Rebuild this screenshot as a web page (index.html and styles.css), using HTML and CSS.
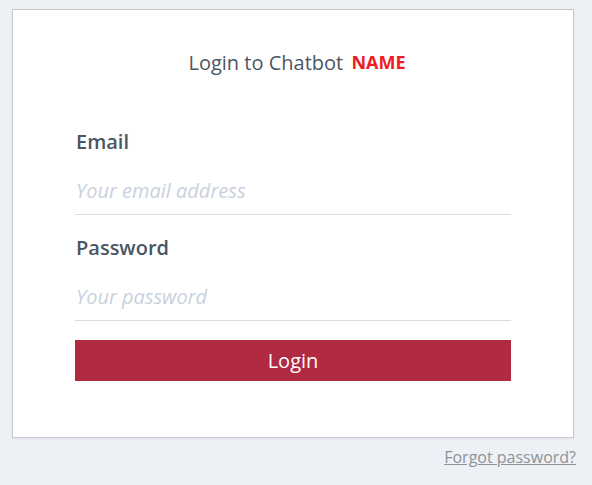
FILE: index.html
```html
<!DOCTYPE html>
<html>
<head>
<meta charset="utf-8">
<link rel="stylesheet" href="styles.css">
</head>
<body>
<div class="page">
  <div class="card">
    <h1 class="title">Login to Chatbot <span class="brand">NAME</span></h1>
    <form class="form">
      <label class="label" for="email">Email</label>
      <input class="input" id="email" type="text" placeholder="Your email address">
      <label class="label" for="pw">Password</label>
      <input class="input" id="pw" type="password" placeholder="Your password">
      <button class="btn" type="button">Login</button>
    </form>
  </div>
  <div class="footer"><a class="forgot" href="#">Forgot password?</a></div>
</div>
</body>
</html>
```
FILE: styles.css
```css
html, body {
  margin: 0;
  padding: 0;
  background: #edf1f5;
  font-family: "Open Sans", "Noto Sans", sans-serif;
}
.page {
  padding: 9px 18px 0 12px;
}
.card {
  background: #fff;
  border: 1px solid #c5c9ce;
  height: 429px;
  box-sizing: border-box;
  padding: 38px 62px 0;
  box-shadow: 0 1px 3px rgba(0,0,0,0.05);
}
.title {
  margin: 0;
  padding-left: 8px;
  text-align: center;
  font-size: 20px;
  font-weight: 400;
  color: #4a5663;
  line-height: 30px;
}
.brand {
  color: #ee1c25;
  font-weight: 700;
  font-size: 18px;
  line-height: 1;
  vertical-align: 1px;
  margin-left: 3px;
}
.form {
  display: flex;
  flex-direction: column;
  margin-top: 50px;
}
.label {
  font-size: 20px;
  font-weight: 600;
  color: #4a5663;
  line-height: 28px;
  padding-left: 1px;
}
.input {
  border: 0;
  border-bottom: 1px solid #d8dce3;
  font-family: inherit;
  font-size: 20px;
  line-height: 28px;
  height: 59px;
  box-sizing: border-box;
  padding: 20px 0 10px 1px;
  margin: 0 0 19px;
  outline: none;
  background: transparent;
  color: #4a5663;
}
.input::placeholder {
  color: #c9d1dd;
  font-style: italic;
}
.btn {
  height: 41px;
  border: 0;
  background: #b02a42;
  color: #fff;
  font-family: inherit;
  font-size: 20px;
  padding: 0;
}
.footer {
  display: flex;
  justify-content: flex-end;
  margin-top: 7px;
  margin-right: -2px;
}
.forgot {
  font-size: 16px;
  color: #8f9298;
  text-decoration: underline;
  line-height: 24px;
}
```
